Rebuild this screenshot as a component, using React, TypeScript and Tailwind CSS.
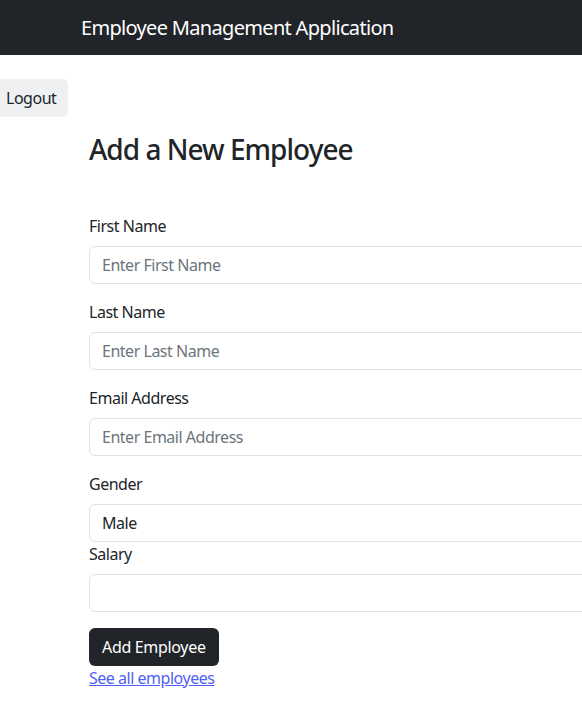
import React, { useState } from 'react';

export default function App() {
  const [gender, setGender] = useState('Male');

  return (
    <div className="w-[582px] h-[715px] overflow-hidden bg-white text-[#212529] font-['Noto_Sans',sans-serif] tracking-[-0.03em]">
      {/* Navbar */}
      <nav className="h-[55px] bg-[#212529] flex items-center pl-[81px]">
        <span className="text-white text-[20px] leading-none tracking-[-0.034em]">Employee Management Application</span>
      </nav>

      {/* Logout */}
      <div className="mt-[24px] -ml-[6px]">
        <button className="h-[38px] px-[12px] rounded-[6px] bg-[#eff0f2] text-[16px] text-[#212529]">Logout</button>
      </div>

      {/* Form */}
      <div className="pl-[89px] w-[660px]">
        <h3 className="text-[28px] font-medium leading-[1.2] mt-[16px] mb-[47px] tracking-[-0.035em]">Add a New Employee</h3>

        <form className="text-[16px]" onSubmit={(e) => e.preventDefault()}>
          <div className="mb-[16px]">
            <label className="block mb-[8px] leading-[24px]">First Name</label>
            <input
              placeholder="Enter First Name"
              className="w-full h-[38px] px-[12px] border border-[#dee2e6] rounded-[6px] placeholder:text-[#6c757d] outline-none"
            />
          </div>
          <div className="mb-[16px]">
            <label className="block mb-[8px] leading-[24px]">Last Name</label>
            <input
              placeholder="Enter Last Name"
              className="w-full h-[38px] px-[12px] border border-[#dee2e6] rounded-[6px] placeholder:text-[#6c757d] outline-none"
            />
          </div>
          <div className="mb-[16px]">
            <label className="block mb-[8px] leading-[24px]">Email Address</label>
            <input
              placeholder="Enter Email Address"
              className="w-full h-[38px] px-[12px] border border-[#dee2e6] rounded-[6px] placeholder:text-[#6c757d] outline-none"
            />
          </div>
          <div>
            <label className="block mb-[8px] leading-[24px]">Gender</label>
            <select
              value={gender}
              onChange={(e) => setGender(e.target.value)}
              className="w-full h-[38px] px-[12px] border border-[#dee2e6] rounded-[6px] bg-white appearance-none outline-none"
            >
              <option>Male</option>
              <option>Female</option>
            </select>
          </div>
          <div className="mb-[16px]">
            <label className="block mb-[8px] leading-[24px]">Salary</label>
            <input className="w-full h-[38px] px-[12px] border border-[#dee2e6] rounded-[6px] outline-none" />
          </div>
          <button type="submit" className="h-[38px] px-[13px] rounded-[6px] bg-[#212529] text-white leading-none tracking-[-0.02em]">
            Add Employee
          </button>
          <div className="leading-[24px]">
            <a href="#" className="text-[#4f5ff5] underline">See all employees</a>
          </div>
        </form>
      </div>
    </div>
  );
}
